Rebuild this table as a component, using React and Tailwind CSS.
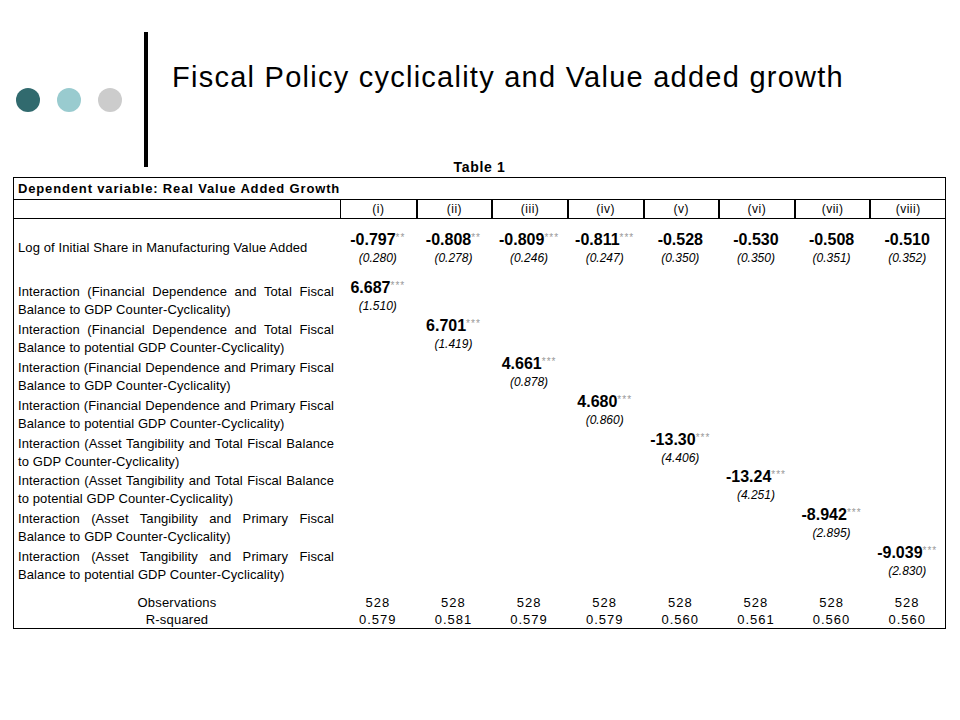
import React from 'react';

// Regression table slide: fiscal policy cyclicality vs. value added growth.
const COLUMNS = ['(i)', '(ii)', '(iii)', '(iv)', '(v)', '(vi)', '(vii)', '(viii)'];

const LOG_ROW = [
    ['-0.797', '**', '(0.280)'],
    ['-0.808', '**', '(0.278)'],
    ['-0.809', '***', '(0.246)'],
    ['-0.811', '***', '(0.247)'],
    ['-0.528', '', '(0.350)'],
    ['-0.530', '', '(0.350)'],
    ['-0.508', '', '(0.351)'],
    ['-0.510', '', '(0.352)'],
];

const INTERACTIONS = [
    ['Interaction (Financial Dependence and Total Fiscal', 'Balance to GDP Counter-Cyclicality)', '6.687', '(1.510)'],
    ['Interaction (Financial Dependence and Total Fiscal', 'Balance to potential GDP Counter-Cyclicality)', '6.701', '(1.419)'],
    ['Interaction (Financial Dependence and Primary Fiscal', 'Balance to GDP Counter-Cyclicality)', '4.661', '(0.878)'],
    ['Interaction (Financial Dependence and Primary Fiscal', 'Balance to potential GDP Counter-Cyclicality)', '4.680', '(0.860)'],
    ['Interaction (Asset Tangibility and Total Fiscal Balance', 'to GDP Counter-Cyclicality)', '-13.30', '(4.406)'],
    ['Interaction (Asset Tangibility and Total Fiscal Balance', 'to potential GDP Counter-Cyclicality)', '-13.24', '(4.251)'],
    ['Interaction (Asset Tangibility and Primary Fiscal', 'Balance to GDP Counter-Cyclicality)', '-8.942', '(2.895)'],
    ['Interaction (Asset Tangibility and Primary Fiscal', 'Balance to potential GDP Counter-Cyclicality)', '-9.039', '(2.830)'],
];

const R_SQUARED = ['0.579', '0.581', '0.579', '0.579', '0.560', '0.561', '0.560', '0.560'];

const Estimate = ({ value, stars, se }) => (
    <div className="flex flex-col items-center">
        <div className="leading-[18px] whitespace-nowrap">
            <span className="text-[16px] font-bold">{value}</span>
            {stars && (
                <span className="inline-block align-top pt-[2px] text-[10px] leading-none tracking-[1px] text-[#999999]">{stars}</span>
            )}
        </div>
        <div className="text-[12px] italic leading-[18px]">{se}</div>
    </div>
);

const App = () => {
    return (
        <div className="w-[960px] h-[720px] bg-white text-black font-['Liberation_Sans',Arial,sans-serif] overflow-hidden">
            {/* slide header */}
            <div className="h-[159px] flex items-start">
                <div className="mt-[88px] ml-[16px] flex gap-[17px]">
                    <div className="w-[24px] h-[24px] rounded-full bg-[#316a6e]" />
                    <div className="w-[24px] h-[24px] rounded-full bg-[#99cbcf]" />
                    <div className="w-[24px] h-[24px] rounded-full bg-[#cccccc]" />
                </div>
                <div className="mt-[32px] ml-[22px] w-[4px] h-[135px] bg-black shrink-0" />
                <h1 className="mt-[63px] ml-[24px] text-[29px] leading-[29px] tracking-[1.25px] whitespace-nowrap">
                    Fiscal Policy cyclicality and Value added growth
                </h1>
            </div>

            <div className="ml-[13px] w-[933px]">
                <div className="text-center text-[14px] font-bold leading-[16px] tracking-[0.7px] mb-[2px]">Table 1</div>

                <div className="border border-black">
                    <div className="h-[22px] border-b border-black pl-[4px] flex items-center text-[13px] font-bold tracking-[0.85px]">
                        Dependent variable: Real Value Added Growth
                    </div>
                    <div className="h-[19px] border-b border-black grid grid-cols-[326px_repeat(8,1fr)] text-[12px] tracking-[0.5px]">
                        <div />
                        {COLUMNS.map((c, i) => (
                            <div key={c} className={(i === 0 ? 'border-l' : 'border-l-2') + ' border-black flex items-center justify-center'}>{c}</div>
                        ))}
                    </div>

                    {/* log initial share row */}
                    <div className="h-[60px] grid grid-cols-[326px_repeat(8,1fr)]">
                        <div className="pt-[20px] pl-[4px] text-[13px] leading-[18px] tracking-[0.1px]">
                            Log of Initial Share in Manufacturing Value Added
                        </div>
                        {LOG_ROW.map(([v, s, se], i) => (
                            <div key={i} className="pt-[12px]">
                                <Estimate value={v} stars={s} se={se} />
                            </div>
                        ))}
                    </div>

                    {INTERACTIONS.map(([l1, l2, v, se], row) => (
                        <div key={row} className="h-[37.9px] grid grid-cols-[326px_repeat(8,1fr)]">
                            <div className="pt-[4px] pl-[4px] pr-[6px] text-[13px] leading-[18px] tracking-[0.1px] whitespace-nowrap">
                                <div className="text-justify [text-align-last:justify]">{l1}</div>
                                <div>{l2}</div>
                            </div>
                            {COLUMNS.map((c, i) => (
                                <div key={c}>
                                    {i === row && <Estimate value={v} stars="***" se={se} />}
                                </div>
                            ))}
                        </div>
                    ))}

                    {/* summary rows */}
                    <div className="pt-[12px] grid grid-cols-[326px_repeat(8,1fr)] text-[13px] leading-[17px]">
                        <div className="text-center tracking-[0.2px]">Observations</div>
                        {COLUMNS.map((c) => (
                            <div key={c} className="text-center tracking-[1px]">528</div>
                        ))}
                        <div className="text-center tracking-[0.2px]">R-squared</div>
                        {R_SQUARED.map((r, i) => (
                            <div key={i} className="text-center tracking-[1px]">{r}</div>
                        ))}
                    </div>
                </div>
            </div>
        </div>
    );
};

export default App;
